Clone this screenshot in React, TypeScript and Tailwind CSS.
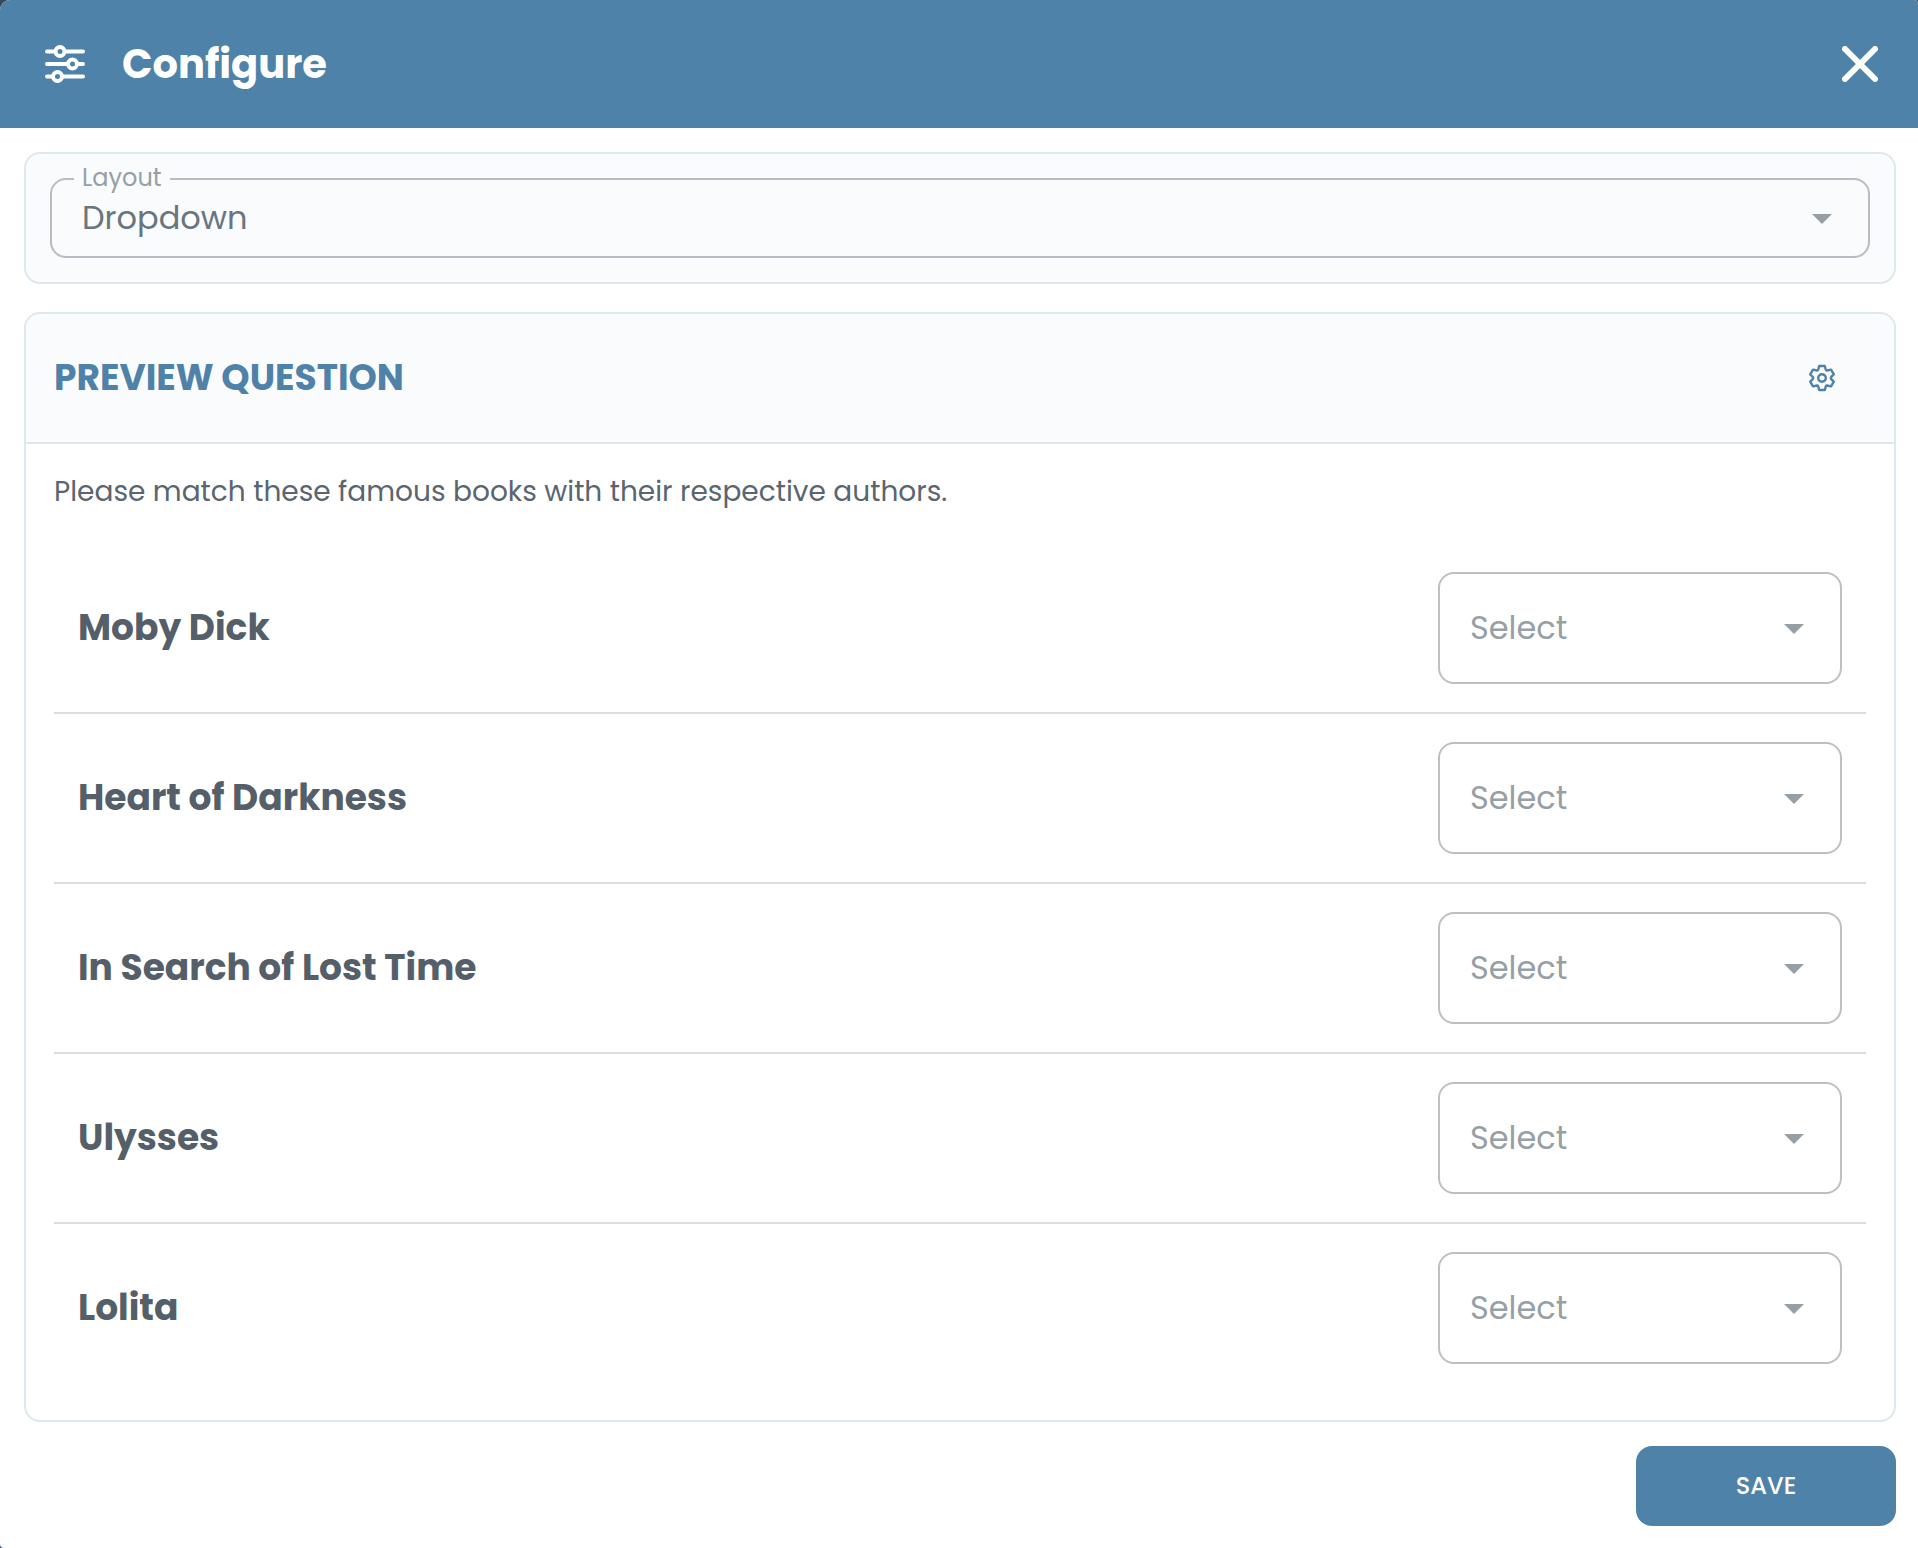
import { useId } from "react";

const books = ["Moby Dick", "Heart of Darkness", "In Search of Lost Time", "Ulysses", "Lolita"];

function Caret() {
  return (
    <svg viewBox="0 0 20 10" className="pointer-events-none absolute right-[38px] top-1/2 h-[10px] w-5 -translate-y-1 fill-[#979fa6]" aria-hidden="true">
      <path d="M0 0h20L10 10z" />
    </svg>
  );
}

function SlidersIcon() {
  return (
    <svg viewBox="0 0 40 38" className="h-[38px] w-10" fill="none" stroke="currentColor" strokeWidth="4" strokeLinecap="round" aria-hidden="true">
      <path d="M2 6.500h8M20 6.500h18M2 19h20.500M32.500 19h5.500M2 31.500h5.500M17.500 31.500h20.500" />
      <circle cx="15" cy="6.500" r="4.500" />
      <circle cx="27.500" cy="19" r="4.500" />
      <circle cx="12.500" cy="31.500" r="4.500" />
    </svg>
  );
}

function CloseIcon() {
  return (
    <svg viewBox="0 0 36 36" className="size-9" fill="none" stroke="currentColor" strokeWidth="6" strokeLinecap="round" aria-hidden="true">
      <path d="M3 3l30 30M33 3L3 33" />
    </svg>
  );
}

function GearIcon() {
  return (
    <svg viewBox="-14 -14 28 28" className="size-7" fill="none" stroke="currentColor" strokeWidth="2.400" strokeLinejoin="round" aria-hidden="true">
      <path d="M-2.800-12H2.800L3.800-8.300Q4.200-7.500 5-7.500L9-8.400L11.800-3.600L9-.8Q8.600 0 9 .8L11.800 3.600L9 8.400L5 7.500Q4.200 7.500 3.800 8.300L2.800 12H-2.800L-3.800 8.300Q-4.200 7.500-5 7.500L-9 8.400L-11.800 3.600L-9 .8Q-8.600 0-9-.8L-11.800-3.600L-9-8.400L-5-7.500Q-4.200-7.500-3.800-8.300Z" />
      <circle r="3.800" />
    </svg>
  );
}

function BookRow({ title }: { title: string }) {
  const id = useId();
  return (
    <li className="flex items-center justify-between gap-6 border-b-2 border-[#dcdddf] px-6 py-7 last:border-b-0">
      <label htmlFor={id} className="text-[36px] leading-[48px] font-bold text-[#545f69]">{title}</label>
      <div className="relative w-[404px]">
        <select id={id} className="block h-28 w-full appearance-none rounded-2xl border-2 border-[#bbc0c4] bg-white px-[30px] text-[32px] text-[#979fa6]">
          <option>Select</option>
        </select>
        <Caret />
      </div>
    </li>
  );
}

export default function App() {
  return (
    <div className="min-h-screen bg-[#34495c] font-[Poppins,Inter,sans-serif]">
      <main className="min-h-screen overflow-hidden rounded-tl-[10px] rounded-tr-[4px] rounded-bl-[4px] bg-white">
        <header className="flex h-32 items-center bg-[#4f82a9] pl-[45px] pr-10 text-white">
          <SlidersIcon />
          <h1 className="ml-[37px] flex-1 text-[40px] leading-[60px] font-bold">Configure</h1>
          <button type="button" aria-label="Close"><CloseIcon /></button>
        </header>
        <div className="flex flex-col pt-6 pr-[22px] pb-[22px] pl-6">
          <section className="rounded-2xl border-2 border-[#dce8ee] bg-[#fafbfd] p-6">
            <div className="relative">
              <select id="layout" className="block h-20 w-full appearance-none rounded-2xl border-2 border-[#b6bdc4] bg-transparent px-[30px] text-[32px] text-[#69757f]">
                <option>Dropdown</option>
              </select>
              <label htmlFor="layout" className="absolute top-0 left-6 -translate-y-1/2 bg-[#fafbfd] px-2 text-2xl text-[#979fa6]">Layout</label>
              <Caret />
            </div>
          </section>
          <section className="mt-7 overflow-hidden rounded-2xl border-2 border-[#dce8ee]">
            <header className="flex h-[130px] items-center justify-between border-b-2 border-[#dce8ee] bg-[#fafbfd] pr-[58px] pl-7 text-[#4f82a9]">
              <h2 className="text-[36px] leading-[54px] font-bold">PREVIEW QUESTION</h2>
              <button type="button" aria-label="Settings"><GearIcon /></button>
            </header>
            <div className="p-7">
              <p className="mb-8 text-[28px] leading-10 text-[#5a6570]">Please match these famous books with their respective authors.</p>
              <ul>
                {books.map((title) => <BookRow key={title} title={title} />)}
              </ul>
            </div>
          </section>
          <button type="button" className="mt-6 h-20 w-[260px] self-end rounded-2xl bg-[#4f82a9] text-2xl font-medium text-white">SAVE</button>
        </div>
      </main>
    </div>
  );
}
